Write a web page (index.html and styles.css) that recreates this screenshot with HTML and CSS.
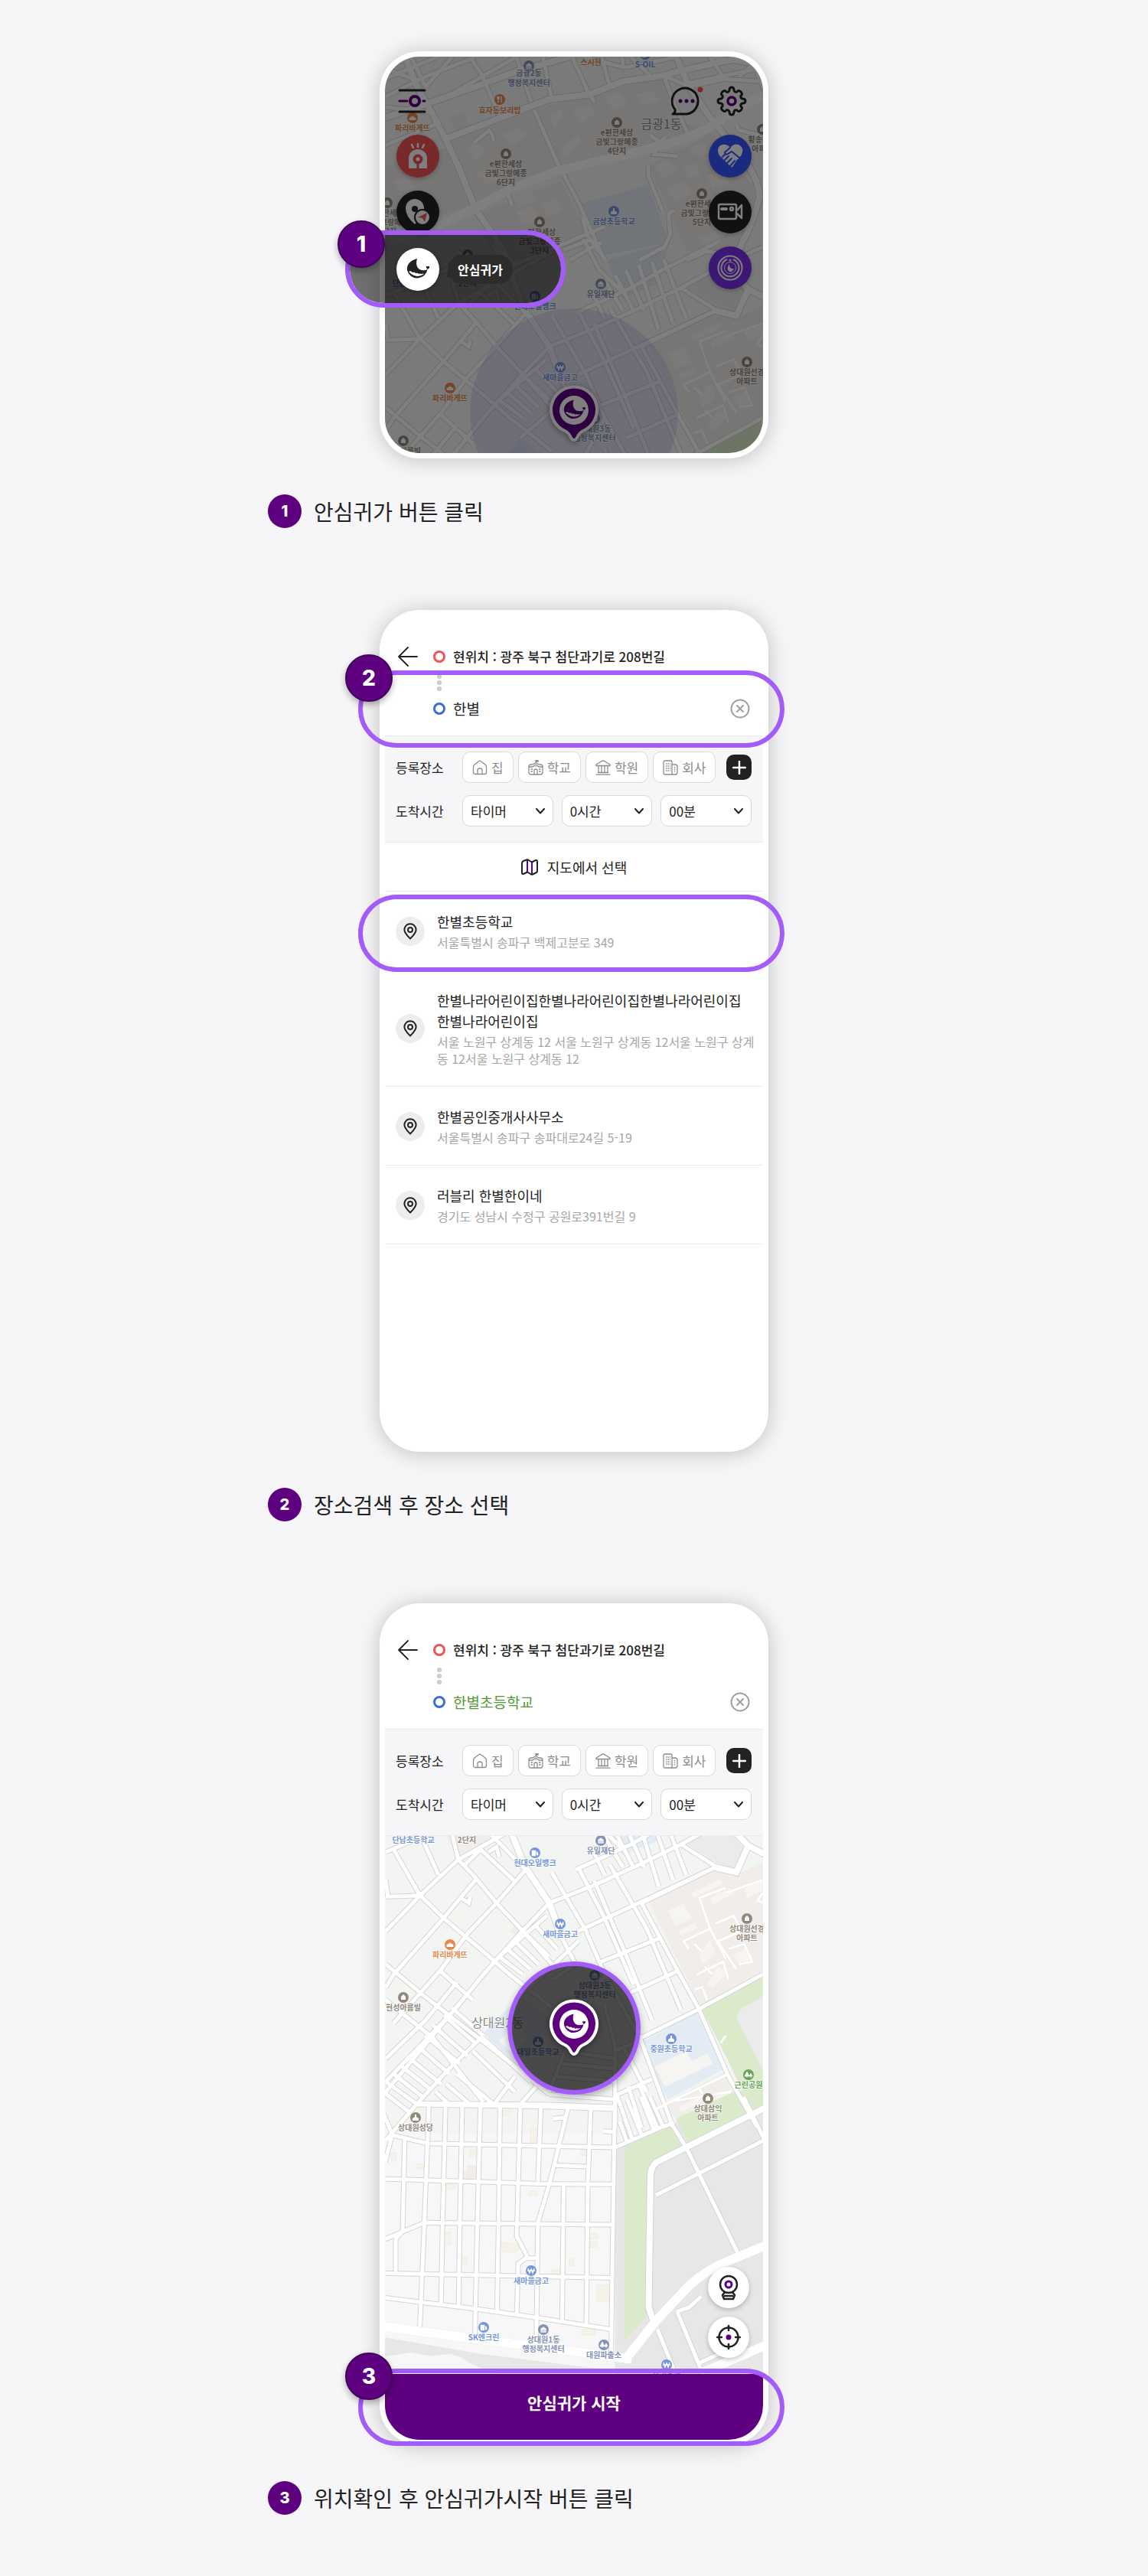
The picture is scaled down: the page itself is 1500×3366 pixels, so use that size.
FILE: index.html
```html
<!DOCTYPE html>
<html lang="ko">
<head>
<meta charset="utf-8">
<meta name="viewport" content="width=device-width, initial-scale=1">
<title>안심귀가 이용 안내</title>
<link rel="stylesheet" href="styles.css">
</head>
<body>
<svg class="defs" width="0" height="0" aria-hidden="true">
  <defs>
    <!-- street centre lines, grouped by map sheet -->
    <g id="minor" class="line">
      <g transform="translate(-73 -24) scale(.3827 .3333)">
        <path d="M191 230L330 150L500 73M191 160L230 140L370 73M191 120L300 165M280 73L330 190M330 190L420 73M400 230L640 73M480 73L520 140L580 300M640 73L690 250M730 73L760 235M191 420L380 330M191 270L350 290M830 73L890 225M870 73L1010 115M1000 73L1005 115M960 195L930 73M1010 115L1190 73M1140 140L1180 260L1225 375M1150 150L1210 180L1483 115M1210 195L1350 160L1483 170M1350 160L1300 73M1400 150L1450 100L1483 200M1310 73L1483 110M1030 73L1100 150"/>
        <path d="M700 280L780 490L850 640L940 870M880 200L905 250M495 410L545 362Q562 375 560 402M1095 378L1130 410L1150 385M1130 410L1110 455L1190 462M555 630L610 610L625 655M865 700L880 770L945 870M1180 675Q1155 680 1160 710L1165 770L1140 830M1090 500L1090 540L1140 680M1470 380L1400 360L1390 340M1220 870L1290 835L1410 860M1140 820L1060 870M820 870L930 800M800 830L890 790"/>
      </g>
      <g transform="translate(-23 272) scale(.3444 .3333)">
        <path d="M690 320L860 250L1030 170L1190 90L1330 10L1500 -70M800 430L1060 305L1320 180M875 555L1115 455M980 680L1180 585M1035 850L1250 740L1500 600M940 1075L1080 1010M790 190L1000 90L1120 20L1330 -90M560 0L900 -150"/>
        <path d="M700 200L830 430L900 600L1035 850L1110 1060L1160 1200M800 180L900 380L1010 640M860 230L980 520L1080 780M920 170L1060 420L1190 740M1040 320L1180 590L1260 740L1370 1000L1480 1200M850 100L900 210M900 60L970 180M940 40L1010 180M980 20L1050 180M1030 0L1105 255M1080 -10L1160 230M1125 -20L1210 210M1190 90L1320 175M1040 320L1320 180M820 -100L880 20L960 100"/>
        <path d="M100 110L200 290L290 380L440 510L540 600L700 730M70 120L345 0M205 60L270 210M310 0L345 150L410 220L490 320L590 430L700 560M345 150L500 60L700 -50M345 150L200 290L70 430M370 170L430 110L560 235M70 295L205 290M70 230L78 295M600 190L490 320L380 440L280 580L100 790M600 190L440 20L330 -60M410 230L280 390L100 600L70 650M690 320L570 450L440 600L330 740L70 1020M680 370L490 540L280 800L70 1060M70 560L210 680L360 800L560 960L690 1070M70 930L220 780L340 630M270 580L400 700M70 700L250 850L440 1100M355 300L385 320L390 295M460 120L490 100L500 140"/>
        <path d="M740 460L790 560L700 620M500 530L590 600M530 500L620 580M560 470L650 560M600 440L690 530M640 410L720 500M580 680L690 580L800 470M440 840L310 970L190 1105L70 1250M190 1105L690 1110L940 1120M690 1070L940 1090M340 990L480 1110M300 1030L390 1110M260 1060L310 1110M400 900L560 1060M440 850L620 1020M130 960L240 1050M100 990L210 1080M70 1020L190 1110M150 920L280 1030M190 880L310 990M220 840L350 950M250 800L380 920M290 760L410 870M320 730L440 840M480 1110L560 1000M580 1110L640 1040M60 1060L160 1140M900 720L940 880L940 1200M690 1060L750 900L940 930M740 950L940 970M720 1000L940 1020M750 900L900 600M990 1040L1040 1200M1030 1030L1100 1200M940 900L1030 860M970 880L1060 1060"/>
        <path class="lane" d="M1360 260L1260 300L1300 420L1200 470L1220 500M1320 400L1390 370L1420 430L1330 470L1400 580M1240 480L1270 510M1370 500L1430 480L1460 550L1410 560M1250 600L1350 550L1370 620M1280 570L1310 600M1300 420L1360 540M1500 320L1480 310L1500 280M1240 660L1270 650L1290 700M1500 230L1360 280M1340 870L1360 840M1090 1130L1370 990M1260 1050L1290 1100M1140 1100L1380 1060"/>
      </g>
      <g transform="translate(-73 632) scale(.3954 .3571)">
        <path d="M330 20L325 170L320 310L315 460L300 840M250 150L243 490L220 520L220 640M385 30L375 460L370 755M440 30L432 460L428 765M500 30L490 460L482 870M565 30L560 460L555 785M632 30L625 310L620 510L655 585M685 590L650 590L625 610L620 800M700 40L690 310M690 465L685 875M790 40L730 310L690 460M740 80L780 75M775 320L770 820M865 40L855 310L850 830M945 -20L942 190L938 480L932 930M905 125L945 128"/>
        <path d="M290 28L700 35L945 45M210 140L325 170L650 178L945 185M745 250L850 255M185 300L700 318L940 320M185 520L315 460L935 468M185 645L640 655L935 662M185 735L480 775L700 810L930 850M210 130L185 240M180 60L210 140M945 185L1100 110L1140 95M950 -10L1000 150M960 90L985 165M985 10L1035 145M1030 0L1075 125M1060 0L1105 110"/>
        <path d="M1130 95L1180 185L1350 570M1080 360L1434 160M1370 0L1440 160M1180 185L1434 45M1085 850L1140 1000M1150 785L1230 1000M1150 785L1190 770L1230 730M1220 975L1300 935"/>
      </g>
    </g>
    <g id="major" class="line">
      <g transform="translate(-73 -24) scale(.3827 .3333)">
        <path d="M260 73L300 190L350 290L395 390L440 500L500 670L560 770L620 880M191 312L330 258L500 190L640 130L760 92L840 65M395 395L600 305L750 240L890 220L1000 170L1150 145L1190 130L1330 95L1483 60M1180 60L1230 190L1300 310L1400 450Q1465 540 1470 620Q1450 720 1410 800L1385 880"/>
        <path class="wide" d="M191 800L380 730L500 665L620 590L780 520L1000 460L1200 400L1300 350L1400 270L1483 225"/>
      </g>
      <g transform="translate(-23 272) scale(.3444 .3333)">
        <path d="M540 30L600 180L690 320L740 460M480 -80L560 60M1320 180L1400 200L1445 95L1510 130M1330 -30L1445 95"/>
      </g>
      <g transform="translate(-73 632) scale(.3954 .3571)">
        <path d="M1440 40L1080 240Q1062 260 1062 290L1056 770L1075 830"/>
        <path class="wide" d="M180 840L480 885L800 930L1000 960M980 960L1080 820L1190 690Q1250 630 1320 600L1440 545M1230 1010L1440 910"/>
      </g>
    </g>
    <g id="map-base">
      <rect class="block" width="494" height="1000"/>
      <rect class="plain" y="680" width="300" height="320"/>
      <g transform="translate(-73 -24) scale(.3827 .3333)">
        <path class="estate" d="M410 400L700 280L1140 150L1180 330L1290 350L1200 395L780 510L500 650zM510 690L700 600L790 560L900 810L700 870H560zM1090 500L1310 370L1460 600L1390 850L1220 830zM191 500L400 430L480 660L230 740L191 760zM410 310l50-20 25 70-50 20z"/>
        <path class="school" d="M855 650L1090 575L1160 800L950 870L1000 1020L1130 960L1160 800L940 850z"/>
        <path class="house" d="M470 430l40-20 20 30-30 40zM590 380l50-25 40 20-60 50zM750 300l40-20 10 30-30 40zM830 280l60-20 20 30-50 50zM940 230l50-20 30 50-50 20zM1050 220l50-15 30 40-60 20zM790 440l60-60 10 25-50 60zM500 530l50-20 30 50-40 10zM620 600l60-20 30 60-60 20zM640 680l50-20 30 50-60 20zM720 650l60-20 20 50-50 20zM1110 500l50-30 30 50-50 30zM1210 510l40-20 20 40-40 20zM1150 590l60-30 30 50-60 30zM1290 540l60-20 20 50-60 20zM1260 780l60-20 20 40-60 20zM220 560l50-20 30 50-60 10zM1230 430l50-20 20 40-50 10z"/>
      </g>
      <g transform="translate(-23 272) scale(.3444 .3333)">
        <path class="estate" d="M1065 310L1320 190L1400 210L1440 190L1500 160V600L1260 720zM1130 1110L1355 980L1380 1050L1170 1165zM300 60L345 145L470 80L430 0zM540 430l30-30 20 20-25 30z"/>
        <path class="school" d="M440 830L580 680L700 780L560 950zM1035 870L1250 745L1355 970L1140 1090z"/>
        <path class="green" d="M1268 735L1500 612V690L1430 725Q1395 750 1405 780L1500 975V1120L1460 1140L1370 940zM1390 1060L1445 1145L1220 1200L1170 1165z"/>
        <path class="grey" d="M1500 690L1430 725Q1395 750 1405 780L1500 975zM1200 80L1330 10L1440 95L1400 195L1330 165z" opacity=".7"/>
        <path class="house" d="M1230 280l110-55 8 20-110 55zM1140 350l60-30 30 60-60 30zM1180 430l60-30 10 20-60 30zM1300 300l80-40 10 25-80 40zM1430 260l70-30v40l-60 30zM1260 520l40-60 20 60-50 40zM1290 640l40-70 40 20-60 60zM1390 520l50-20 20 40-50 20zM500 860l60-70 50 50-60 70zM1090 960l120-60 20 40 60-30 20 40-180 90zM1180 1120l120-60 10 20-120 60zM330 350l30-30 20 20-30 35zM370 640l25-25 15 20-25 25z"/>
      </g>
      <g transform="translate(-73 632) scale(.3954 .3571)">
        <path class="grey" d="M945 190L1130 100L1434 -60V1030H945zM185 880L500 940L930 1000L940 1030H185z"/>
        <path class="plain" d="M185 950L270 935L340 948L400 940L440 955Q470 985 560 1012L700 1030H185z"/>
        <path class="green" d="M975 182L1130 108L1165 185L1070 240L1056 280L1050 805L975 895zM1148 85L1434 -60V45L1188 170zM1150 60z"/>
        <path class="cream" d="M205 205h16v30h-16zM288 245h26v18h-26zM465 190h20v30h-20zM387 320h30v18h-30zM380 495h22v45h-22zM570 530l50 10 10-15 10 20-25 25-45-5zM433 585h22v30h-22zM660 345h28v15h-28zM860 500h26v20h-26zM860 530h26v20h-26zM793 588h16v30h-16zM735 632h28v14h-28zM885 688h38v60h-38zM835 850h44v22h-44zM832 195h18v20h-18zM573 48h24v18h-24zM665 115h20v50h-20z"/>
        <path class="estate" d="M455 250h30v50h-44v-28h14z"/>
      </g>
      <use href="#minor" class="casing"/>
      <use href="#major" class="casing casing-major"/>
      <use href="#minor" class="road"/>
      <use href="#major" class="road road-major"/>
    </g>

    <!-- map markers -->
    <g id="poi-home"><circle r="7" fill="currentColor"/><path d="M-3 3V-1L0-4L3-1V3z" fill="#fff"/></g>
    <g id="poi-school"><circle r="7" fill="currentColor"/><path d="M-4 4V1L-1-1V-4H1V-1L4 1V4z" fill="#fff"/></g>
    <g id="poi-won"><circle r="7" fill="currentColor"/><path d="M-4-3L-2 3L0-2L2 3L4-3M-5 0H5" fill="none" stroke="#fff" stroke-width="1.3"/></g>
    <g id="poi-office"><circle r="7" fill="currentColor"/><path d="M-4 4V-1L0-4L4-1V4zM-2 0V3M0 0V3M2 0V3" fill="#fff" stroke="currentColor" stroke-width=".6"/></g>
    <g id="poi-fuel"><circle r="7" fill="currentColor"/><path d="M-4-3H1V4H-4zM2-2L4 0V3H2" fill="#fff" stroke="#fff" stroke-width=".6"/></g>
    <g id="poi-food"><circle r="7" fill="currentColor"/><path d="M-2-4V4M2-4V4M-3-4V-1H-1V-4" fill="none" stroke="#fff" stroke-width="1.4"/></g>
    <g id="poi-bread"><circle r="7" fill="currentColor"/><path d="M-4 3Q-6 0-2-1Q0-4 2-1Q6 0 4 3z" fill="#fff"/></g>
    <g id="poi-tree"><circle r="7" fill="currentColor"/><path d="M-2-4L1 2H-5zM3-2L5 2H1zM-2 2V4M3 2V4" fill="#fff" stroke="#fff" stroke-width=".8"/></g>

    <symbol id="moon" viewBox="0 0 30 30">
      <path fill="currentColor" d="M14 1C5 3 0 9 1 16A13.500 13.500 0 0 0 27.500 15C20 19 10 14 14 1z"/>
      <path class="cloud" d="M3 18q3-2 5 1q3-1 4 1q3-1 4 1q2-1 4 0q2-1 3 0Q13 28 3 18z"/>
      <path fill="currentColor" d="M26 11h4v2l-2 2l-2-2z"/>
    </symbol>
    <symbol id="pin-moon" viewBox="0 0 66 74">
      <path d="M33 2.500A30 30 0 0 1 45 60Q40 62 37 69Q33 75 29 69Q26 62 21 60A30 30 0 0 1 33 2.500z" fill="#5e007f" stroke="#fff" stroke-width="4"/>
      <circle cx="33" cy="33" r="19" fill="#fff"/>
      <use href="#moon" x="19" y="18" width="29" height="30" color="#5e007f"/>
    </symbol>
    <symbol id="i-back" viewBox="0 0 26 26"><path d="M25 13H1M13 1L1 13L13 25" fill="none" stroke="#222" stroke-width="1.800" stroke-linecap="round" stroke-linejoin="round"/></symbol>
    <symbol id="i-clear" viewBox="0 0 26 26"><circle cx="13" cy="13" r="11.500"/><path d="M9 9L17 17M17 9L9 17"/></symbol>
    <symbol id="i-home" viewBox="0 0 20 20"><path d="M1.500 9Q1.500 7.500 3 6L9 1.500Q10 1 11 1.500L17 6Q18.500 7.500 18.500 9V16Q18.500 18.500 16 18.500H4Q1.500 18.500 1.500 16zM7 18V13Q7 11 10 11Q13 11 13 13V18"/></symbol>
    <symbol id="i-school" viewBox="0 0 20 20"><path d="M1 9Q1 6 4 6H6L10 3.500L14 6H16Q19 6 19 9V16Q19 19 16 19H4Q1 19 1 16zM10 3.500V.5H13V2H10M1 9H6L10 6L14 9H19M8 19V13Q10 11 12 13V19M3.500 12H6M3.500 15H6M14 12H16.500M14 15H16.500M10 8V9"/></symbol>
    <symbol id="i-academy" viewBox="0 0 20 20"><path d="M1 6L9 1.200Q10 .8 11 1.200L19 6V7.500H1zM3 16.500H17M.5 19.200H19.500M4 8V16M8 8V16M12 8V16M16 8V16"/></symbol>
    <symbol id="i-company" viewBox="0 0 20 20"><path d="M3 1H10Q12 1 12 3V19H3Q1 19 1 17V3Q1 1 3 1zM12 6H16Q19 6 19 9V16Q19 19 16 19H12"/><path d="M4 5H10M4 8H10M4 11H10M4 14H10M15.500 9V16" stroke-dasharray="1.500 1"/></symbol>
    <symbol id="i-chevron" viewBox="0 0 12 8"><path d="M1 1L6 6.500L11 1" fill="none" stroke="#222" stroke-width="2" stroke-linecap="round" stroke-linejoin="round"/></symbol>
    <symbol id="i-place" viewBox="0 0 18 22"><path d="M9 20.500Q5 17 2.500 12.500A7.500 7.500 0 1 1 15.500 12.500Q13 17 9 20.500z"/><circle cx="9" cy="9" r="3"/></symbol>
  </defs>
</svg>

<main class="guide">
  <section class="step">
    <div class="phone">
      <div class="screen screen-map">
        <svg class="map" viewBox="0 0 494 518" preserveAspectRatio="xMidYMin slice" role="img" aria-label="금광동 지도">
          <use href="#map-base"/>
          <circle cx="247" cy="465" r="136" fill="#7864c8" fill-opacity=".16"/>
          <g class="slate" transform="translate(188 12)"><use href="#poi-office"/><text y="13">금광2동</text><text y="26">행정복지센터</text></g>
          <g class="orange" transform="translate(269 -6)"><text y="17">스시현</text></g>
          <g class="blue" transform="translate(340 -3)"><use href="#poi-fuel"/><text y="17">S-OIL</text></g>
          <g class="orange" transform="translate(150 56)"><use href="#poi-food"/><text y="18">효자동보리밥</text></g>
          <g class="orange" transform="translate(36 80)"><use href="#poi-bread"/><text y="17">파리바게뜨</text></g>
          <g class="brown" transform="translate(303 86)"><use href="#poi-home"/><text y="17">e편한세상</text><text y="29">금빛그랑메종</text><text y="41">4단지</text></g>
          <g class="brown" transform="translate(158 127)"><use href="#poi-home"/><text y="17">e편한세상</text><text y="29">금빛그랑메종</text><text y="41">6단지</text></g>
          <g class="brown" transform="translate(3 191)"><use href="#poi-home"/><text y="17">e편한세상</text><text y="29">금빛그랑메종</text><text y="41">1단지</text></g>
          <g class="brown" transform="translate(202 216)"><use href="#poi-home"/><text y="17">e편한세상</text><text y="29">금빛그랑메종</text><text y="41">3단지</text></g>
          <g class="brown" transform="translate(108 259)"><use href="#poi-home"/><text y="28">금빛그랑메종</text><text y="41">2단지</text></g>
          <g class="blue" transform="translate(299 202)"><use href="#poi-school"/><text y="17">금상초등학교</text></g>
          <g class="brown" transform="translate(414 179)"><use href="#poi-home"/><text y="17">e편한세상</text><text y="29">금빛그랑메종</text><text y="41">5단지</text></g>
          <g class="brown" transform="translate(493 95)"><use href="#poi-home"/><text y="17">황송마을</text><text y="29">아파트</text></g>
          <g class="town" transform="translate(361 94)"><text>금광1동</text></g>
          <g class="blue" transform="translate(37 300)"><text>단남초등학교</text></g>
          <g class="blue" transform="translate(196 313)"><use href="#poi-fuel"/><text y="17">현대오일뱅크</text></g>
          <g class="slate" transform="translate(282 297)"><use href="#poi-office"/><text y="17">유일재단</text></g>
          <g class="blue" transform="translate(229 406)"><use href="#poi-won"/><text y="17">새마을금고</text></g>
          <g class="orange" transform="translate(85 433)"><use href="#poi-bread"/><text y="17">파리바게뜨</text></g>
          <g class="brown" transform="translate(473 399)"><use href="#poi-home"/><text y="17">상대원선경</text><text y="29">아파트</text></g>
          <g class="brown" transform="translate(24 502)"><use href="#poi-home"/><text y="17">현성아름빌</text></g>
          <g class="slate" transform="translate(274 473)"><use href="#poi-office"/><text y="17">상대원3동</text><text y="29">행정복지센터</text></g>
        </svg>
        <div class="topbar">
          <button class="plain-btn" aria-label="필터">
            <svg width="38" height="32" viewBox="0 0 38 32" fill="none" stroke-width="3" stroke-linecap="round"><path stroke="#222" d="M2 2H35M2 30H35"/><path stroke="#5e007f" d="M2 16H12M33 16H35"/><circle cx="22" cy="16" r="6" stroke="#5e007f" stroke-width="4"/></svg>
          </button>
          <div class="topbar-right">
            <button class="plain-btn" aria-label="메시지">
              <svg width="42" height="40" viewBox="0 0 42 40"><path d="M2 37Q6 35 5 31A17 17 0 1 1 20 37z" fill="none" stroke="#222" stroke-width="3" stroke-linejoin="round"/><g fill="#5e007f"><circle cx="12" cy="20" r="2.500"/><circle cx="20" cy="20" r="2.500"/><circle cx="28" cy="20" r="2.500"/></g><circle cx="38" cy="5" r="3.500" fill="#f05454"/></svg>
            </button>
            <button class="plain-btn" aria-label="설정">
              <svg width="40" height="40" viewBox="0 0 40 40" fill="none"><path stroke="#222" stroke-width="3" stroke-linejoin="round" d="M17 6Q17 2 20 2Q23 2 23 6Q24 9 27 8Q29 5 32 8Q35 11 32 13Q31 16 34 17Q38 17 38 20Q38 23 34 23Q31 24 32 27Q35 29 32 32Q29 35 27 32Q24 31 23 34Q23 38 20 38Q17 38 17 34Q16 31 13 32Q11 35 8 32Q5 29 8 27Q9 24 6 23Q2 23 2 20Q2 17 6 17Q9 16 8 13Q5 11 8 8Q11 5 13 8Q16 9 17 6z"/><circle cx="20" cy="20" r="5" stroke="#5e007f" stroke-width="3.500"/></svg>
            </button>
          </div>
        </div>
        <div class="tools">
          <div class="tool-col">
            <button class="round red" aria-label="긴급신고"><svg width="26" height="34" viewBox="0 0 26 34"><path d="M2 32V20A11 11 0 0 1 24 20V32z" fill="#fff" stroke="#fff" stroke-width="2" stroke-linejoin="round"/><path d="M5 2L7 6M13 1V5M21 2L19 6" fill="none" stroke="#fff" stroke-width="2.500" stroke-linecap="round"/><circle cx="13" cy="21" r="4.500" fill="#fff" stroke="#f05454" stroke-width="4"/><path d="M13 26V34" stroke="#f05454" stroke-width="3"/></svg></button>
            <button class="round black" aria-label="위치공유"><svg width="36" height="36" viewBox="0 0 36 36"><path d="M14 34Q2 24 2 13A12 12 0 0 1 26 13Q26 24 14 34z" fill="#fff"/><circle cx="14" cy="14" r="4" fill="#222"/><circle cx="24" cy="25" r="10" fill="#fff" stroke="#222" stroke-width="2"/><path d="M30 19L27 31L24 26L18 25z" fill="#f05454"/></svg></button>
          </div>
          <div class="tool-col">
            <button class="round blue-bg" aria-label="도움"><svg width="34" height="34" viewBox="0 0 34 34"><path d="M17 6C12-1 1 1 1 10Q1 15 6 19L18 31Q20 32 21 30L32 15Q36 6 28 2Q22 0 17 6z" fill="#fff"/><path d="M17 6L10 12Q10 16 14 14L19 11L29 19M7 18L11 14M10 22L15 17M13 26L19 20M17 30L23 23M22 30L27 22" fill="none" stroke="#3355ff" stroke-width="2" stroke-linecap="round"/></svg></button>
            <button class="round black" aria-label="동영상"><svg width="34" height="24" viewBox="0 0 34 24" fill="none" stroke="#fff" stroke-width="2.500" stroke-linejoin="round"><rect x="2" y="2" width="23" height="19" rx="2"/><path d="M26 10L32 3V20L26 14"/><circle cx="19" cy="8" r="2"/><path d="M6 8H12" stroke-width="4" stroke-linecap="round"/></svg></button>
            <button class="round violet" aria-label="안심귀가 모드"><svg width="34" height="34" viewBox="0 0 34 34" fill="none" stroke="#fff" stroke-width="2"><circle cx="17" cy="17" r="15.500"/><path d="M13 6A11.500 11.500 0 1 0 21 6"/><circle cx="17" cy="17" r="7.500" stroke-width="1"/><circle cx="17" cy="7" r=".6"/><path d="M16 12Q16 19 22 18Q20 23 16 22Q11 19 16 12z" fill="#fff" stroke="none"/></svg></button>
          </div>
        </div>
        <svg class="pin pin-home" width="66" height="74"><use href="#pin-moon"/></svg>
        <div class="shade"></div>
      </div>
      <div class="spot spot-menu">
        <button class="round white" aria-label="안심귀가"><svg width="30" height="30"><use href="#moon"/></svg></button>
        <span class="tag">안심귀가</span>
      </div>
      <span class="badge badge-menu">1</span>
    </div>
    <p class="caption"><span class="num">1</span>안심귀가 버튼 클릭</p>
  </section>

  <section class="step">
    <div class="phone">
      <div class="screen screen-form">
        <header class="route">
          <button class="plain-btn back" aria-label="뒤로"><svg width="26" height="26"><use href="#i-back"/></svg></button>
          <span class="ring ring-red"></span>
          <p class="origin">현위치 : 광주 북구 첨단과기로 208번길</p>
          <span class="dots"><i></i><i></i><i></i></span>
          <span class="ring ring-blue"></span>
          <input class="dest" type="text" value="한별" aria-label="도착지">
          <button class="plain-btn clear" aria-label="지우기"><svg class="clear-icon" width="26" height="26"><use href="#i-clear"/></svg></button>
        </header>
        <div class="panel">
          <div class="panel-row">
            <span class="panel-label">등록장소</span>
            <div class="chips">
              <button class="chip"><svg width="20" height="20"><use href="#i-home"/></svg>집</button>
              <button class="chip"><svg width="20" height="20"><use href="#i-school"/></svg>학교</button>
              <button class="chip"><svg width="20" height="20"><use href="#i-academy"/></svg>학원</button>
              <button class="chip"><svg width="20" height="20"><use href="#i-company"/></svg>회사</button>
              <button class="add" aria-label="장소 추가"><svg width="18" height="18" viewBox="0 0 18 18"><path d="M9 1V17M1 9H17" stroke="#fff" stroke-width="2.500" stroke-linecap="round"/></svg></button>
            </div>
          </div>
          <div class="panel-row">
            <span class="panel-label">도착시간</span>
            <div class="selects">
              <label class="select"><select aria-label="타이머"><option>타이머</option></select><svg width="12" height="8"><use href="#i-chevron"/></svg></label>
              <label class="select"><select aria-label="시간"><option>0시간</option></select><svg width="12" height="8"><use href="#i-chevron"/></svg></label>
              <label class="select"><select aria-label="분"><option>00분</option></select><svg width="12" height="8"><use href="#i-chevron"/></svg></label>
            </div>
          </div>
        </div>
        <button class="pick"><svg width="22" height="22" viewBox="0 0 22 22" fill="none" stroke-width="2" stroke-linejoin="round"><path stroke="#5e007f" d="M8 2V18M14 4V20"/><path stroke="#222" d="M1 6Q1 4 3 3L7 1.500Q8 1 9 1.500L13 4Q14 4.500 15 4L19 2Q21 1.500 21 4V16Q21 18 19 18.500L15 20.500Q14 21 13 20.500L9 18Q8 17.500 7 18L3 20Q1 20.500 1 18z"/></svg>지도에서 선택</button>
        <ul class="results">
          <li><span class="place"><svg width="18" height="22"><use href="#i-place"/></svg></span><div><strong>한별초등학교</strong><span class="addr">서울특별시 송파구 백제고분로 349</span></div></li>
          <li><span class="place"><svg width="18" height="22"><use href="#i-place"/></svg></span><div><strong>한별나라어린이집한별나라어린이집한별나라어린이집한별나라어린이집</strong><span class="addr">서울 노원구 상계동 12 서울 노원구 상계동 12서울 노원구 상계동 12서울 노원구 상계동 12</span></div></li>
          <li><span class="place"><svg width="18" height="22"><use href="#i-place"/></svg></span><div><strong>한별공인중개사사무소</strong><span class="addr">서울특별시 송파구 송파대로24길 5-19</span></div></li>
          <li><span class="place"><svg width="18" height="22"><use href="#i-place"/></svg></span><div><strong>러블리 한별한이네</strong><span class="addr">경기도 성남시 수정구 공원로391번길 9</span></div></li>
        </ul>
      </div>
      <div class="spot spot-wide spot-search"></div>
      <div class="spot spot-wide spot-result"></div>
      <span class="badge badge-search">2</span>
    </div>
    <p class="caption"><span class="num">2</span>장소검색 후 장소 선택</p>
  </section>

  <section class="step">
    <div class="phone">
      <div class="screen screen-form">
        <header class="route">
          <button class="plain-btn back" aria-label="뒤로"><svg width="26" height="26"><use href="#i-back"/></svg></button>
          <span class="ring ring-red"></span>
          <p class="origin">현위치 : 광주 북구 첨단과기로 208번길</p>
          <span class="dots"><i></i><i></i><i></i></span>
          <span class="ring ring-blue"></span>
          <input class="dest chosen" type="text" value="한별초등학교" aria-label="도착지">
          <button class="plain-btn clear" aria-label="지우기"><svg class="clear-icon" width="26" height="26"><use href="#i-clear"/></svg></button>
        </header>
        <div class="panel">
          <div class="panel-row">
            <span class="panel-label">등록장소</span>
            <div class="chips">
              <button class="chip"><svg width="20" height="20"><use href="#i-home"/></svg>집</button>
              <button class="chip"><svg width="20" height="20"><use href="#i-school"/></svg>학교</button>
              <button class="chip"><svg width="20" height="20"><use href="#i-academy"/></svg>학원</button>
              <button class="chip"><svg width="20" height="20"><use href="#i-company"/></svg>회사</button>
              <button class="add" aria-label="장소 추가"><svg width="18" height="18" viewBox="0 0 18 18"><path d="M9 1V17M1 9H17" stroke="#fff" stroke-width="2.500" stroke-linecap="round"/></svg></button>
            </div>
          </div>
          <div class="panel-row">
            <span class="panel-label">도착시간</span>
            <div class="selects">
              <label class="select"><select aria-label="타이머"><option>타이머</option></select><svg width="12" height="8"><use href="#i-chevron"/></svg></label>
              <label class="select"><select aria-label="시간"><option>0시간</option></select><svg width="12" height="8"><use href="#i-chevron"/></svg></label>
              <label class="select"><select aria-label="분"><option>00분</option></select><svg width="12" height="8"><use href="#i-chevron"/></svg></label>
            </div>
          </div>
        </div>
        <div class="map-area">
          <svg class="map" viewBox="0 291 494 703" preserveAspectRatio="xMidYMin slice" role="img" aria-label="상대원동 지도">
            <use href="#map-base"/>
            <g class="blue" transform="translate(37 300)"><text>단남초등학교</text></g>
            <g class="brown" transform="translate(107 300)"><text>2단지</text></g>
            <g class="blue" transform="translate(196 313)"><use href="#poi-fuel"/><text y="17">현대오일뱅크</text></g>
            <g class="slate" transform="translate(282 297)"><use href="#poi-office"/><text y="17">유일재단</text></g>
            <g class="blue" transform="translate(229 406)"><use href="#poi-won"/><text y="17">새마을금고</text></g>
            <g class="orange" transform="translate(85 433)"><use href="#poi-bread"/><text y="17">파리바게뜨</text></g>
            <g class="brown" transform="translate(473 399)"><use href="#poi-home"/><text y="17">상대원선경</text><text y="29">아파트</text></g>
            <g class="brown" transform="translate(24 502)"><use href="#poi-home"/><text y="17">현성아름빌</text></g>
            <g class="slate" transform="translate(274 473)"><use href="#poi-office"/><text y="17">상대원3동</text><text y="29">행정복지센터</text></g>
            <g class="town" transform="translate(147 541)"><text>상대원2동</text></g>
            <g class="blue" transform="translate(200 560)"><use href="#poi-school"/><text y="17">대일초등학교</text></g>
            <g class="blue" transform="translate(374 556)"><use href="#poi-school"/><text y="17">중원초등학교</text></g>
            <g class="leaf" transform="translate(475 603)"><use href="#poi-tree"/><text y="17">근린공원</text></g>
            <g class="brown" transform="translate(422 634)"><use href="#poi-home"/><text y="17">상대삼익</text><text y="29">아파트</text></g>
            <g class="brown" transform="translate(40 659)"><use href="#poi-school"/><text y="17">상대원성당</text></g>
            <g class="blue" transform="translate(191 859)"><use href="#poi-won"/><text y="17">새마을금고</text></g>
            <g class="blue" transform="translate(129 933)"><use href="#poi-fuel"/><text y="17">SK엔크린</text></g>
            <g class="slate" transform="translate(207 936)"><use href="#poi-office"/><text y="17">상대원1동</text><text y="29">행정복지센터</text></g>
            <g class="slate" transform="translate(286 956)"><use href="#poi-tree"/><text y="17">대원파출소</text></g>
            <g class="blue" transform="translate(368 982)"><use href="#poi-won"/><text y="17">우리은행</text></g>
          </svg>
          <div class="spot-circle"></div>
          <svg class="pin pin-start" width="66" height="74"><use href="#pin-moon"/></svg>
          <div class="map-tools">
            <button class="round small" aria-label="CCTV"><svg width="26" height="34" viewBox="0 0 26 34" fill="none" stroke-width="2.500" stroke-linejoin="round"><path stroke="#222" d="M8 23L5 27L7 32H19L21 27L18 23M7 28H19"/><circle cx="13" cy="13" r="11" stroke="#222" fill="#fff"/><circle cx="13" cy="13" r="4" stroke="#5e007f" stroke-width="3"/></svg></button>
            <button class="round small" aria-label="현재 위치"><svg width="32" height="32" viewBox="0 0 32 32" fill="none" stroke="#222" stroke-width="2.500" stroke-linecap="round"><circle cx="16" cy="16" r="12.500"/><path d="M16 1V7M16 25V31M1 16H7M25 16H31"/><circle cx="16" cy="16" r="3.500" fill="#5e007f" stroke="none"/></svg></button>
          </div>
        </div>
        <button class="start">안심귀가 시작</button>
      </div>
      <div class="spot spot-wide spot-start"></div>
      <span class="badge badge-start">3</span>
    </div>
    <p class="caption"><span class="num">3</span>위치확인 후 안심귀가시작 버튼 클릭</p>
  </section>
</main>
</body>
</html>
```

FILE: styles.css
```css
* { box-sizing: border-box; }

body {
  margin: 0;
  background: #f6f6f8;
  color: #222;
  font-family: "Noto Sans CJK KR", sans-serif;
  font-size: 17px;
  line-height: 24px;
}

button, input, select { font: inherit; color: inherit; }
button { border: 0; padding: 0; cursor: pointer; display: flex; align-items: center; justify-content: center; }
p { margin: 0; }
svg { display: block; flex: none; }
.defs { position: absolute; }

.guide { max-width: 800px; margin: 0 auto; padding: 67px 0 82px; }
.step + .step { margin-top: 107px; }

.phone {
  position: relative;
  width: 100%;
  max-width: 508px;
  margin: 0 auto;
  padding: 7px;
  border-radius: 52px;
  background: #fff;
  box-shadow: 0 2px 28px rgba(0, 0, 0, .22);
}

.screen { position: relative; overflow: hidden; border-radius: 45px; background: #fff; }
.screen-map { min-height: 518px; padding: 35px 15px; }
.screen-form { min-height: 1086px; display: flex; flex-direction: column; }

.caption {
  display: flex;
  align-items: center;
  gap: 16px;
  margin-top: 47px;
  font-size: 28px;
  line-height: 44px;
}
.num, .badge {
  display: flex;
  align-items: center;
  justify-content: center;
  border-radius: 50%;
  background: #5e007f;
  color: #fff;
  font-family: Inter, sans-serif;
  font-weight: 800;
}
.num { width: 44px; height: 44px; font-size: 20px; }
.badge {
  position: absolute;
  width: 62px;
  height: 62px;
  border: 2px solid #43005c;
  font-size: 28px;
  box-shadow: 0 4px 8px rgba(0, 0, 0, .3);
}
.badge-menu { left: -55px; top: 221px; }
.badge-search { left: -45px; top: 58px; }
.badge-start { left: -45px; bottom: 59px; }

/* highlight outlines */
.spot { position: absolute; border: 6px solid #a35cf9; border-radius: 51px; }
.spot-menu {
  left: -45px;
  top: 234px;
  width: 288px;
  height: 101px;
  display: flex;
  align-items: center;
  gap: 11px;
  padding-left: 61px;
  background: rgba(0, 0, 0, .55);
  background-clip: padding-box;
}
.spot-wide { left: -28px; right: -21px; height: 101px; pointer-events: none; }
.spot-search { top: 79px; }
.spot-result { top: 372px; }
.spot-start { bottom: -1px; }
.spot-circle {
  position: absolute;
  left: 50%;
  top: 164px;
  width: 174px;
  height: 174px;
  margin-left: -87px;
  border: 6px solid #a35cf9;
  border-radius: 50%;
  background: rgba(0, 0, 0, .7);
  box-shadow: 0 4px 10px rgba(0, 0, 0, .3);
}
.tag {
  width: 85px;
  border-radius: 19px;
  background: #2c2c2c;
  color: #fff;
  font-size: 16px;
  font-weight: 700;
  line-height: 38px;
  text-align: center;
}
.shade { position: absolute; inset: 0; background: rgba(0, 0, 0, .5); }

/* map drawing */
.map { position: absolute; inset: 0; width: 100%; height: 100%; }
.map text { font-size: 10px; font-weight: 700; text-anchor: middle; fill: currentColor; stroke: #fff; stroke-opacity: .6; stroke-width: 2px; paint-order: stroke; }
.map .town text { font-size: 16px; font-weight: 400; }
.line path { vector-effect: non-scaling-stroke; fill: none; }
.line .lane { stroke-width: 3px; }
.casing { stroke: #d4d4d4; stroke-width: 7px; }
.casing-major { stroke-width: 10px; }
.road { stroke: #fff; stroke-width: 5px; }
.road-major { stroke-width: 8px; }
.line .wide { stroke-width: 12px; }
.block { fill: #f3f5f3; }
.plain { fill: #f7f7f7; }
.estate { fill: #f1edea; }
.school { fill: #e3ebf4; }
.house { fill: #f7f5f2; }
.green { fill: #daeaca; }
.grey { fill: #e7e7e7; }
.cream { fill: #f6f2ea; stroke: #e8e2d8; stroke-width: 1; }
.brown { color: #93887c; }
.slate { color: #8592b8; }
.blue { color: #7595dc; }
.orange { color: #e6894a; }
.leaf { color: #63a552; }
.town { color: #888; }
.cloud { fill: #fff; }

.pin { position: absolute; left: 50%; margin-left: -33px; filter: drop-shadow(0 2px 4px rgba(0, 0, 0, .4)); }
.pin-home { top: 429px; }
.pin-start { top: 213px; }

.topbar { position: relative; display: flex; justify-content: space-between; align-items: center; padding: 3px 6px 0 2px; }
.topbar-right { display: flex; gap: 17px; }
.plain-btn { background: none; }
.tools { position: relative; display: flex; justify-content: space-between; align-items: flex-start; margin-top: 24px; }
.tool-col { display: grid; gap: 17px; }
.round { width: 56px; height: 56px; border-radius: 50%; box-shadow: 0 2px 6px rgba(0, 0, 0, .25); }
.red { background: #f05454; }
.black { background: #222; }
.blue-bg { background: #3355ff; }
.violet { background: #7a2fe8; }
.white { background: #fff; color: #222; }
.small { width: 54px; height: 54px; background: #fff; }

/* route header */
.route {
  display: grid;
  grid-template-columns: 45px 26px 1fr 40px;
  grid-auto-rows: 34px;
  align-items: center;
  padding: 37px 10px 18px 13px;
}
.back { justify-self: start; padding-left: 4px; }
.ring { width: 16px; height: 16px; border: 3px solid; border-radius: 50%; justify-self: center; }
.ring-red { border-color: #f05454; }
.ring-blue { border-color: #3a6fd8; grid-column: 2; }
.origin { grid-column: 3 / 5; padding-left: 5px; font-weight: 500; }
.dots { grid-column: 2; display: grid; gap: 2px; justify-content: center; }
.dots i { width: 6px; height: 6px; border-radius: 50%; background: #ccc; }
.dest { width: 100%; border: 0; padding: 0 0 0 5px; background: none; font-size: 19px; outline: 0; }
.chosen { color: #4f9a32; }
.clear-icon { fill: none; stroke: #a0a0a0; stroke-width: 2; stroke-linecap: round; }

/* saved places and arrival time */
.panel { display: grid; gap: 16px; padding: 20px 15px 20px 14px; border: solid #ececee; border-width: 1px 0; background: #f6f6f8; }
.panel-row { display: grid; grid-template-columns: 87px 1fr; align-items: center; }
.chips { display: flex; align-items: center; gap: 6px; }
.chip {
  height: 41px;
  gap: 5px;
  padding: 0 12px;
  border: 1px solid #d9d9dc;
  border-radius: 10px;
  background: #fff;
  color: #8c8c8c;
}
.chip svg { fill: none; stroke: #8c8c8c; stroke-width: 1.3; }
.add { width: 33px; height: 33px; margin-left: auto; border-radius: 10px; background: #222; }
.selects { display: grid; grid-template-columns: repeat(3, 1fr); gap: 11px; }
.select { position: relative; display: grid; align-items: center; }
.select select { appearance: none; width: 100%; height: 41px; padding: 0 10px; border: 1px solid #d9d9dc; border-radius: 10px; background: #fff; }
.select svg { position: absolute; right: 11px; pointer-events: none; }

.pick { gap: 12px; height: 64px; border-bottom: 1px solid #ececee; background: #fff; font-size: 18px; }
.results { margin: 0; padding: 0; list-style: none; }
.results li { display: flex; align-items: center; gap: 16px; padding: 26px 9px 25px 14px; border-bottom: 1px solid #ececee; }
.results strong, .addr { display: block; word-break: break-all; }
.results strong { padding-right: 7px; font-size: 18px; font-weight: 400; line-height: 27px; }
.addr { color: #a6a6a6; font-size: 16px; line-height: 22px; padding-top: 2px; }
.place { flex: none; width: 38px; height: 38px; display: grid; place-items: center; border-radius: 50%; background: #ededed; }
.place svg { fill: none; stroke: #222; stroke-width: 2; }

.map-area { position: relative; flex: 1; min-height: 703px; overflow: hidden; }
.map-tools { position: absolute; right: 18px; bottom: 21px; display: grid; gap: 11px; }
.start { height: 86px; padding-bottom: 12px; background: #5e007f; color: #fff; font-size: 21px; font-weight: 700; }
```
